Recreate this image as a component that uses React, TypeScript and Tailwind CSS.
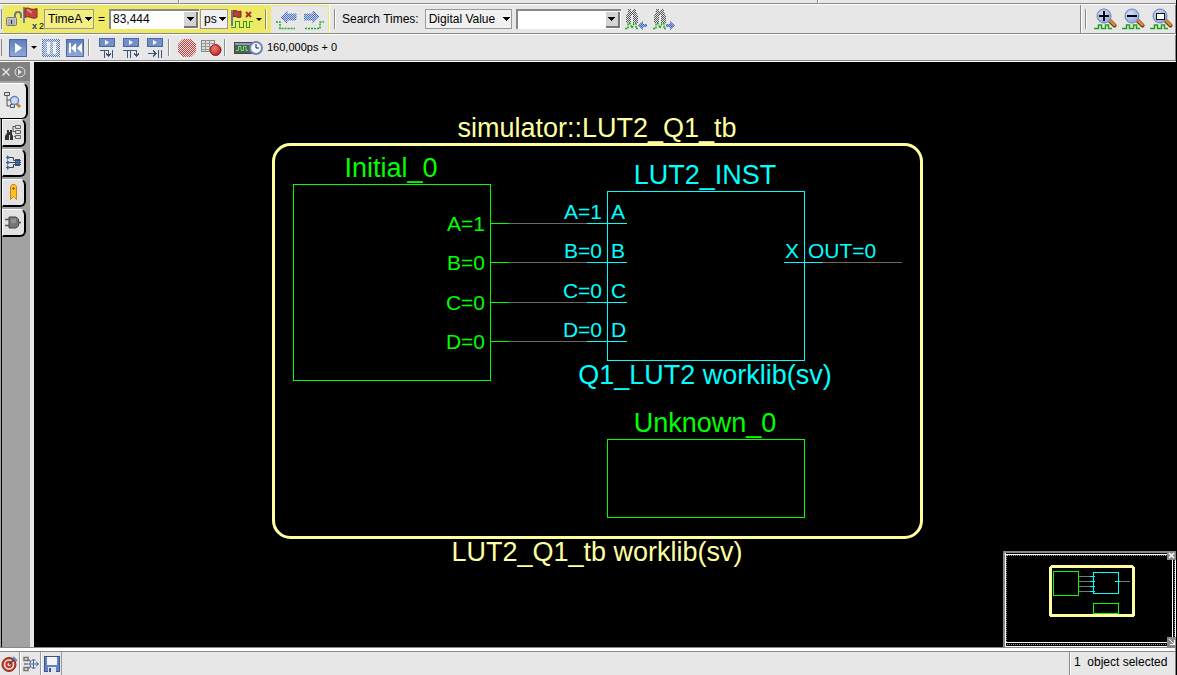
import React, { useState } from "react";

type Kids = { children?: React.ReactNode };

function Icon({ w, h, label, children }: Kids & { w: number; h: number; label?: string }) {
  return (
    <svg width={w} height={h} viewBox={`0 0 ${w} ${h}`} aria-label={label} aria-hidden={label ? undefined : true} className="block shrink-0">
      {children}
    </svg>
  );
}

function IconButton({ label, className, disabled, children }: Kids & { label: string; className?: string; disabled?: boolean }) {
  return (
    <button type="button" aria-label={label} title={label} disabled={disabled} className={"flex shrink-0 items-center justify-center " + (className ?? "")}>
      {children}
    </button>
  );
}

function SharedDefs() {
  return (
    <svg width="0" height="0" className="absolute" aria-hidden="true">
      <defs>
        <pattern id="checker" width="2" height="2" patternUnits="userSpaceOnUse">
          <rect width="2" height="2" fill="#000" />
          <rect width="1" height="1" fill="#fff" />
          <rect x="1" y="1" width="1" height="1" fill="#fff" />
        </pattern>
        <mask id="dither" maskUnits="userSpaceOnUse" x="0" y="0" width="40" height="40">
          <rect width="40" height="40" fill="url(#checker)" shapeRendering="crispEdges" />
        </mask>
        <linearGradient id="blueTile" x1="0" y1="0" x2="0" y2="1">
          <stop offset="0" stopColor="#5f7fbc" />
          <stop offset="1" stopColor="#8fa9d8" />
        </linearGradient>
        <radialGradient id="lens" cx="0.4" cy="0.35" r="0.7">
          <stop offset="0" stopColor="#d3ddfa" />
          <stop offset="1" stopColor="#8ea6e0" />
        </radialGradient>
        <radialGradient id="redBall" cx="0.4" cy="0.35" r="0.7">
          <stop offset="0" stopColor="#f08070" />
          <stop offset="1" stopColor="#b81e1e" />
        </radialGradient>
      </defs>
    </svg>
  );
}

function Divider() {
  return <span className="my-1 w-[2px] shrink-0 self-stretch border-r border-white bg-[#888888]" />;
}

function Caret() {
  return (
    <Icon w={7} h={4}>
      <path d="M0 0H7V1H6V2H5V3H4V4H3V3H2V2H1V1H0Z" fill="#000" shapeRendering="crispEdges" />
    </Icon>
  );
}

function Dropdown({ label, options, className }: { label: string; options: string[]; className: string }) {
  return (
    <div className={"relative flex h-5 shrink-0 items-center border border-[#999999] " + className}>
      <select aria-label={label} className="h-[18px] w-full appearance-none bg-transparent pl-[3px] text-[12px] leading-[18px] text-black outline-none">
        {options.map((o) => (
          <option key={o}>{o}</option>
        ))}
      </select>
      <span className="pointer-events-none absolute right-px">
        <Caret />
      </span>
    </div>
  );
}

function Combo({ label, value, className }: { label: string; value: string; className: string }) {
  const [text, setText] = useState(value);
  return (
    <div className={"flex h-5 shrink-0 border-t-2 border-l-2 border-[#888888] bg-white " + className}>
      <input aria-label={label} value={text} onChange={(e) => setText(e.target.value)} className="min-w-0 flex-1 bg-transparent pb-[2px] pl-[2px] text-[12px] leading-4 text-black outline-none" />
      <button type="button" aria-label={label + " list"} className="my-px mr-px flex w-[14px] items-center justify-center border-r-2 border-b-2 border-[#777777] bg-[#d4d4d4]">
        <Caret />
      </button>
    </div>
  );
}

function SearchWave({ dir }: { dir: "left" | "right" }) {
  return (
    <Icon w={22} h={22}>
      <g mask="url(#dither)">
        <path d="M3 1H6V3H8V1H11V4L13 8V15H8V7H6V15H1V8L3 4Z" fill="#555" />
      </g>
      <path d="M0 20.500H3V15.500H5L7 20L9 15.500H11V20.500H13" fill="none" stroke="#22a822" strokeWidth="1.500" strokeDasharray="2 1" />
      {dir === "left" ? <path d="M13 17.500L18 13V16H22V19H18V22Z" fill="#9db0dc" /> : <path d="M22 17.500L17 13V16H13V19H17V22Z" fill="#9db0dc" />}
      <g mask="url(#dither)">
        {dir === "left" ? <path d="M13 17.500L18 13V16H22V19H18V22Z" fill="#4a6dbb" /> : <path d="M22 17.500L17 13V16H13V19H17V22Z" fill="#4a6dbb" />}
      </g>
    </Icon>
  );
}

function ZoomIcon({ mark }: { mark: "plus" | "minus" | "box" }) {
  return (
    <Icon w={23} h={22}>
      <path d="M0 20.500H4.500V17H7.500V20.500H11.500V17H14.500V20.500H18" fill="none" stroke="#22a022" strokeWidth="1.500" />
      <path d="M15 12L20.500 17.500" stroke="#5b3a12" strokeWidth="4" strokeLinecap="round" />
      <path d="M15.500 12L20.500 17" stroke="#d88a2c" strokeWidth="2.500" strokeLinecap="round" />
      <circle cx="10" cy="8" r="7" fill="url(#lens)" stroke="#7184ad" />
      <g shapeRendering="crispEdges">
        {mark !== "box" && <rect x="5" y="7" width="10" height="2" fill="#000" />}
        {mark === "plus" && <rect x="9" y="3" width="2" height="10" fill="#000" />}
        {mark === "box" && (
          <>
            <rect x="6" y="5" width="9" height="7" fill="#111" />
            <rect x="7" y="6" width="7" height="5" fill="#fff" />
          </>
        )}
      </g>
    </Icon>
  );
}

function BlueTile({ children }: Kids) {
  return (
    <Icon w={18} h={18}>
      <rect x="0.500" y="0.500" width="17" height="17" fill="url(#blueTile)" stroke="#4a66a4" />
      {children}
    </Icon>
  );
}

function StepIcon({ d }: { d: string }) {
  return (
    <Icon w={17} h={20}>
      <rect x="0.500" y="0.500" width="15" height="8" fill="#7391c8" stroke="#4a66a4" />
      <path d="M6 2V7L10 4.500Z" fill="#fff" />
      <path d={d} fill="none" stroke="#3a5578" strokeWidth="1" shapeRendering="crispEdges" />
    </Icon>
  );
}

function MenuBarEdge() {
  return (
    <div className="flex h-[5px] shrink-0 border-b border-white">
      <span className="w-[179px] shrink-0 border-r border-b border-[#888888]" />
      <span className="w-[639px] shrink-0 border-r border-b border-l border-[#888888] border-l-white" />
      <span className="flex-1 border-b border-l border-[#888888] border-l-white" />
    </div>
  );
}

function TimeToolbar() {
  return (
    <div className="flex h-[30px] shrink-0 border-b border-white">
      <div className="flex min-w-0 flex-1 border-b border-[#888888]">
        <span className="my-1 mr-px w-[2px] shrink-0 border-r border-[#888888]" />
        <div className="flex shrink-0 items-center bg-[#efea66] pl-[3px]">
          <IconButton label="Lock cursors">
            <Icon w={16} h={16}>
              <path d="M9 8V4Q9 1 12 1Q15 1 15 4V7" fill="none" stroke="#777" strokeWidth="2" />
              <rect x="0.500" y="6.500" width="10" height="8" rx="1" fill="#c9c9c9" stroke="#777" />
              <path d="M2 9H9M2 11H9M2 13H9" stroke="#9a9a9a" />
              <rect x="5" y="9" width="1" height="4" fill="#333" />
            </Icon>
          </IconButton>
          <IconButton label="Cursor flag" className="ml-px h-6 w-[21px] items-start">
            <span className="relative block h-6 w-[21px]">
              <Icon w={17} h={17}>
                <rect x="0" y="0" width="2" height="16" fill="#7280a0" />
                <path d="M2 1.500C6 -0.500 8 4 14 1.500V10.500C9 13 6 8 2 10.500Z" fill="#c5433a" stroke="#7d2a2a" />
                <path d="M4 3.500C6 2.500 7 5 9 5.500" stroke="#e98a7d" strokeWidth="2" fill="none" />
              </Icon>
              <span className="absolute right-0 bottom-0 flex items-end text-[9px] leading-[10px] text-black">
                <b className="pr-[2px] text-[#223a80]">x</b>2
              </span>
            </span>
          </IconButton>
          <Dropdown label="Time cursor" options={["TimeA", "TimeB"]} className="w-[50px] bg-[#f3ee85]" />
          <span className="w-[15px] shrink-0 text-center text-[12px]">=</span>
          <Combo label="Cursor time" value="83,444" className="w-[90px]" />
          <Dropdown label="Time unit" options={["ps", "ns"]} className="ml-px w-[28px] bg-[#f1f1f1]" />
          <IconButton label="Cursor options" className="ml-[3px] gap-[2px]">
            <Icon w={23} h={20}>
              <path d="M2 2C5 0 7 4 10 2V8C7 10 5 6 2 8Z" fill="#b8402f" stroke="#7d2a2a" />
              <rect x="0" y="1" width="2" height="16" fill="#6d7890" />
              <path d="M15 3L20 8M20 3L15 8" stroke="#a83222" strokeWidth="2" />
              <path d="M0 18.500H4.500V12.500H8.500V18.500H12.500V12.500H15.500V18.500H18.500V12.500H22" fill="none" stroke="#2f9a22" strokeWidth="1.500" shapeRendering="crispEdges" />
            </Icon>
            <Icon w={6} h={3}>
              <path d="M0 0H6L3 3Z" />
            </Icon>
          </IconButton>
          <span className="ml-[3px]" />
          <Divider />
          <div className="mt-px ml-1 flex items-center gap-[7px] self-stretch bg-[#e7e7e7] pr-[3px] pl-[5px]">
            <IconButton label="Previous edge" disabled>
              <Icon w={21} h={20}>
                <path d="M0 12H4V18.500H19" fill="none" stroke="#22a822" strokeWidth="1.500" strokeDasharray="2 1" />
                <path d="M5 7L11 1V4H20V10H11V13Z" fill="#bccaea" />
                <g mask="url(#dither)">
                  <path d="M5 7L11 1V4H20V10H11V13Z" fill="#5c7cc4" stroke="#4a68ae" />
                </g>
              </Icon>
            </IconButton>
            <IconButton label="Next edge" disabled>
              <Icon w={21} h={20}>
                <path d="M1 18.500H16V12H20" fill="none" stroke="#22a822" strokeWidth="1.500" strokeDasharray="2 1" />
                <path d="M15 7L9 1V4H0V10H9V13Z" fill="#bccaea" />
                <g mask="url(#dither)">
                  <path d="M15 7L9 1V4H0V10H9V13Z" fill="#5c7cc4" stroke="#4a68ae" />
                </g>
              </Icon>
            </IconButton>
          </div>
          <span className="w-px shrink-0" />
        </div>
        <div className="flex shrink-0 items-center border-l border-white pl-1">
          <Divider />
          <span className="ml-[6px] text-[12px] whitespace-nowrap">Search Times:</span>
          <span className="w-[6px] shrink-0" />
          <Dropdown label="Search type" options={["Digital Value", "Signal Edge"]} className="w-[87px] bg-[#f1f1f1]" />
          <span className="w-1 shrink-0" />
          <Combo label="Search value" value="" className="w-[105px]" />
          <IconButton label="Search backward" disabled className="ml-1">
            <SearchWave dir="left" />
          </IconButton>
          <IconButton label="Search forward" disabled className="ml-[6px]">
            <SearchWave dir="right" />
          </IconButton>
        </div>
        <span className="ml-auto w-[2px] shrink-0 border-r border-white bg-[#888888]" />
        <div className="flex shrink-0 items-center gap-[5px] border-r border-[#888888] pr-[2px] pl-[3px]">
          <Divider />
          <span />
          <IconButton label="Zoom in" className="-ml-[3px]">
            <ZoomIcon mark="plus" />
          </IconButton>
          <IconButton label="Zoom out">
            <ZoomIcon mark="minus" />
          </IconButton>
          <IconButton label="Zoom fit">
            <ZoomIcon mark="box" />
          </IconButton>
        </div>
      </div>
    </div>
  );
}

function RunToolbar() {
  return (
    <div className="border-b border-white">
      <div className="flex h-[26px] shrink-0 items-center border-r border-b border-[#888888]">
        <span className="my-1 mr-[7px] w-[2px] shrink-0 self-stretch border-r border-[#888888]" />
        <IconButton label="Run">
          <BlueTile>
            <path d="M6 4V14L13 9Z" fill="#fff" />
          </BlueTile>
        </IconButton>
        <IconButton label="Run options" className="ml-1">
          <Icon w={6} h={3}>
            <path d="M0 0H6L3 3Z" />
          </Icon>
        </IconButton>
        <IconButton label="Pause" disabled className="ml-[5px]">
          <Icon w={18} h={18}>
            <rect width="18" height="18" fill="#4a72b8" mask="url(#dither)" />
            <rect x="2" y="2" width="14" height="14" fill="#dfe6f2" fillOpacity="0.300" />
            <path d="M5 3H8V15H5ZM11 3H14V15H11Z" fill="#fff" fillOpacity="0.800" />
          </Icon>
        </IconButton>
        <IconButton label="Reset" className="ml-[6px]">
          <BlueTile>
            <path d="M3 4H5V14H3ZM10 4V14L5 9ZM16 4V14L11 9Z" fill="#fff" />
          </BlueTile>
        </IconButton>
        <span className="w-1 shrink-0" />
        <Divider />
        <IconButton label="Step" className="mt-px ml-[9px]">
          <StepIcon d="M1 12.500H5.500V20M5.500 12.500H9.500V18M7 15.500L9.500 18L12 15.500M13.500 12V20" />
        </IconButton>
        <IconButton label="Next" className="mt-px ml-[7px]">
          <StepIcon d="M0 12.500H13.500V18M4.500 12.500V20M7.500 12.500V20M11 15.500L13.500 18L16 15.500" />
        </IconButton>
        <IconButton label="Run to" className="mt-px ml-[7px]">
          <StepIcon d="M1 15.500H9M6 12.500L9 15.500L6 18.500M11.500 12V20M14.500 12V20" />
        </IconButton>
        <span className="w-1 shrink-0" />
        <Divider />
        <IconButton label="Stop" disabled className="ml-2">
          <Icon w={18} h={18}>
            <path d="M5 0H13L18 5V13L13 18H5L0 13V5Z" fill="#c83a34" mask="url(#dither)" />
          </Icon>
        </IconButton>
        <IconButton label="Record" className="ml-[5px]">
          <Icon w={21} h={17}>
            <rect x="0.500" y="1.500" width="13" height="11" fill="#ddd" stroke="#888" />
            <path d="M1 4.500H13M1 7.500H13M1 10.500H13M4.500 1V13M8.500 1V13" stroke="#999" />
            <circle cx="14.500" cy="11" r="5.500" fill="url(#redBall)" stroke="#8c1a1a" />
          </Icon>
        </IconButton>
        <span className="w-[2px] shrink-0" />
        <Divider />
        <span className="ml-2">
          <Icon w={29} h={14}>
            <rect x="0.500" y="1.500" width="19" height="11" fill="#555c5c" stroke="#444" />
            <rect x="1" y="2" width="19" height="2" fill="#8a9bb8" />
            <path d="M2 9.500H4.500V5.500H7V9.500H9.500V5.500H12V9.500H14" fill="none" stroke="#55f055" />
            <circle cx="22" cy="7" r="6" fill="#f4f6fb" stroke="#7186b5" strokeWidth="2" />
            <path d="M22 3V7H25" fill="none" stroke="#223" />
          </Icon>
        </span>
        <span className="ml-1 text-[11px] whitespace-nowrap">160,000ps + 0</span>
      </div>
    </div>
  );
}

function SideTab({ label, active, children }: Kids & { label: string; active?: boolean }) {
  return (
    <button
      type="button"
      aria-label={label}
      title={label}
      className={
        active
          ? "flex h-9 w-7 items-center justify-center rounded-tr-md rounded-br-md border-t border-r-2 border-b border-t-white border-r-black border-b-black bg-[#e9e9e9]"
          : "flex h-7 w-6 items-center justify-center rounded-tr-md rounded-br-md border-t border-r-2 border-b-2 border-l border-t-white border-r-black border-b-black border-l-white bg-[#e2e2e2]"
      }
    >
      {children}
    </button>
  );
}

function Sidebar() {
  return (
    <nav aria-label="Panels" className="flex w-[34px] shrink-0 border-r-4 border-[#e7e7e7] bg-[#a2a2a2]">
      <div className="flex flex-1 flex-col">
        <div className="flex h-[19px] items-center gap-1 bg-[#808080] pl-[2px]">
          <IconButton label="Close panel">
            <Icon w={8} h={8}>
              <path d="M0.500 0.500L7.500 7.500M7.500 0.500L0.500 7.500" stroke="#e2e2e2" strokeWidth="1.500" />
            </Icon>
          </IconButton>
          <IconButton label="Expand panel">
            <Icon w={12} h={12}>
              <circle cx="6" cy="6" r="5" fill="none" stroke="#e2e2e2" />
              <path d="M4 3V9L8 6Z" fill="#e2e2e2" />
            </Icon>
          </IconButton>
        </div>
        <div className="flex flex-1 flex-col pt-[2px]">
          <SideTab label="Design browser" active>
            <Icon w={18} h={18}>
              <path d="M3 4V14H7M3 8H7" fill="none" stroke="#555" />
              <path d="M0.500 0.500H5.500V3.500H0.500ZM6.500 6.500H10.500V9.500H6.500ZM6.500 12.500H10.500V15.500H6.500Z" fill="#ddd" stroke="#555" />
              <path d="M12.500 11.500L16 15" stroke="#c88430" strokeWidth="3" />
              <circle cx="10.500" cy="8.500" r="4" fill="#cbdcf5" stroke="#6785b8" strokeWidth="1.500" />
            </Icon>
          </SideTab>
          <div className="ml-px flex flex-1 flex-col gap-[2px] border-l border-black">
            <SideTab label="Design search">
              <Icon w={17} h={16}>
                <path d="M2 5H4V7H5V5H7V9L8 11V15H5V10H4V15H0V11L2 8Z" fill="#333" />
                <path d="M8 7V1.500H11M8 6.500H11M11 11.500H9" stroke="#555" fill="none" />
                <path d="M10.500 0.500H15.500V3.500H10.500ZM10.500 5.500H15.500V8.500H10.500ZM10.500 10.500H15.500V13.500H10.500Z" fill="#ddd" stroke="#666" />
              </Icon>
            </SideTab>
            <SideTab label="Scope tree">
              <Icon w={17} h={16}>
                <path d="M1 2.500H8.500V5.500H11M1 7.500H11M1 12.500H8.500V9.500H11" fill="none" stroke="#345" />
                <path d="M2 0L5 2.500L2 5ZM2 5L5 7.500L2 10ZM2 10L5 12.500L2 15Z" fill="#3d67ad" />
                <rect x="10.500" y="4.500" width="4" height="6" fill="#5877ad" stroke="#345080" />
                <path d="M9 5.500H16M9 7.500H16M9 9.500H16" stroke="#345080" />
              </Icon>
            </SideTab>
            <SideTab label="Bookmarks">
              <Icon w={9} h={17}>
                <path d="M1.500 2.500L3 0.500H6L7.500 2.500V15.500L4.500 12.500L1.500 15.500Z" fill="#ffc31f" stroke="#c78410" />
                <path d="M3 4.500H6M4.500 3V6" stroke="#a05c10" />
              </Icon>
            </SideTab>
            <SideTab label="Connections">
              <Icon w={17} h={13}>
                <path d="M0 3.500H5M0 9.500H5M14 6.500H16" stroke="#555" strokeWidth="1.500" />
                <path d="M4 1H11Q14 2 14 6.500Q14 11 11 12H4Z" fill="#777" stroke="#444" />
                <path d="M6 4H11M6 6H11" stroke="#aaa" />
              </Icon>
            </SideTab>
          </div>
        </div>
      </div>
    </nav>
  );
}

const ports = [
  { name: "A", value: "1", y: 223 },
  { name: "B", value: "0", y: 262 },
  { name: "C", value: "0", y: 302 },
  { name: "D", value: "0", y: 341 },
];

function Schematic() {
  return (
    <svg width="680" height="480" viewBox="265 110 680 480" className="block shrink-0 font-['Liberation_Sans',Arial,sans-serif]" role="img" aria-label="Schematic">
      <rect x="273.500" y="144.500" width="648" height="393" rx="17" fill="none" stroke="#ffffa0" strokeWidth="3" />
      <g fill="none" shapeRendering="crispEdges">
        <rect x="293.500" y="184.500" width="197" height="196" stroke="#00ff00" />
        <rect x="607.500" y="191.500" width="197" height="169" stroke="#00ffff" />
        <rect x="607.500" y="439.500" width="197" height="78" stroke="#00ff00" />
        {ports.map((p) => (
          <g key={p.name}>
            <rect x="491" y={p.y} width="18" height="1" fill="#00ff00" />
            <rect x="509" y={p.y} width="78" height="1" fill="#6a6a6a" />
            <rect x="587" y={p.y} width="40" height="1" fill="#00ffff" />
          </g>
        ))}
        <rect x="784" y="262" width="39" height="1" fill="#00ffff" />
        <rect x="823" y="262" width="79" height="1" fill="#6a6a6a" />
      </g>
      <g className="text-[27px]" textAnchor="middle">
        <text x="597" y="137" fill="#ffffa0">simulator::LUT2_Q1_tb</text>
        <text x="391" y="177" fill="#00ff00">Initial_0</text>
        <text x="705" y="184" fill="#00ffff">LUT2_INST</text>
        <text x="705" y="384" fill="#00ffff">Q1_LUT2 worklib(sv)</text>
        <text x="705" y="432" fill="#00ff00">Unknown_0</text>
        <text x="597" y="561" fill="#ffffa0">LUT2_Q1_tb worklib(sv)</text>
      </g>
      <g className="text-[21px]">
        {ports.map((p) => (
          <g key={p.name}>
            <text x="485" y={p.y + 8} textAnchor="end" fill="#00ff00">{`${p.name}=${p.value}`}</text>
            <text x="602" y={p.y - 4} textAnchor="end" fill="#00ffff">{`${p.name}=${p.value}`}</text>
            <text x="611" y={p.y - 4} fill="#00ffff">{p.name}</text>
          </g>
        ))}
        <text x="785" y="258" fill="#00ffff">X</text>
        <text x="808" y="258" fill="#00ffff">OUT=0</text>
      </g>
    </svg>
  );
}

function Minimap() {
  return (
    <svg width="173" height="96" viewBox="0 0 173 96" className="absolute right-0 bottom-0 block" role="img" aria-label="Overview" shapeRendering="crispEdges">
      <rect width="173" height="96" fill="#000" />
      <path d="M0 1H173M1 0V96" stroke="#888" strokeWidth="2" />
      <path d="M2.500 2V96M2 95.500H173M2 91.500H171M169.500 2V92M2 3.500H171M172.500 2V96" stroke="#fff" fill="none" />
      <path d="M4 4.500H169M3.500 4V92M171.500 4V92M4 93.500H169" stroke="#999" strokeDasharray="1 1" fill="none" />
      <rect x="47.500" y="15.500" width="83" height="49" rx="2" fill="none" stroke="#ffffa0" strokeWidth="3" />
      <rect x="50.500" y="20.500" width="25" height="24" fill="none" stroke="#00ff00" />
      <rect x="90.500" y="21.500" width="25" height="21" fill="none" stroke="#00ffff" />
      <rect x="90.500" y="52.500" width="25" height="10" fill="none" stroke="#00ff00" />
      <path d="M76 25.500H87M76 30.500H87M76 35.500H87M76 40.500H87M117 30.500H127" stroke="#777" />
      <path d="M87 25.500H92M87 30.500H92M87 35.500H92M87 40.500H92M112 30.500H117" stroke="#00ffff" />
      <rect x="164" y="0" width="9" height="9" fill="#888" />
      <path d="M166 2L171 7M171 2L166 7" stroke="#fff" shapeRendering="auto" strokeWidth="1.500" />
      <rect x="164" y="86" width="9" height="10" fill="#888" />
      <path d="M166 88L171 93M171.500 89V93.500H167" stroke="#fff" fill="none" />
    </svg>
  );
}

function StatusBar() {
  return (
    <footer className="shrink-0 border-r border-[#888888] bg-[#e7e7e7]">
      <div className="h-[5px] border-t border-b border-[#888888] bg-white" />
      <div className="flex h-[23px] items-stretch">
        <IconButton label="Target" className="w-5 border-r border-[#999999]">
          <Icon w={17} h={16}>
            <circle cx="8" cy="8.500" r="7" fill="#c63a2c" stroke="#8b2a20" />
            <circle cx="8" cy="8.500" r="4.500" fill="#c63a2c" stroke="#f3e5e0" strokeWidth="1.500" />
            <circle cx="8" cy="8.500" r="1.500" fill="#f3e5e0" />
            <path d="M8 8.500L14 2.500" stroke="#445" strokeWidth="1.500" />
            <path d="M12 1L16 5" stroke="#6d86c0" strokeWidth="2" />
          </Icon>
        </IconButton>
        <IconButton label="Pan design" className="w-[21px] border-r border-l border-[#999999] border-l-white">
          <Icon w={16} h={16}>
            <path d="M1 1.500H5V4.500H1ZM1 11.500H5V14.500H1ZM5 3L8 6M5 13L8 10M1 8H5" fill="none" stroke="#777" strokeWidth="1.500" />
            <path d="M10.500 3V13M5.500 8H15.500M8.500 5L10.500 3L12.500 5M8.500 11L10.500 13L12.500 11M13 6L15.500 8L13 10M8 6L6 8L8 10" fill="none" stroke="#48669e" />
          </Icon>
        </IconButton>
        <IconButton label="Save" className="w-[21px] border-r border-l border-[#999999] border-l-white">
          <Icon w={16} h={16}>
            <rect x="0.500" y="0.500" width="15" height="15" fill="#6482bd" stroke="#3b558c" />
            <rect x="3" y="1" width="10" height="8" fill="#f4f4f4" />
            <rect x="4" y="11" width="8" height="5" fill="#dde3ee" />
            <rect x="5" y="12" width="2" height="4" fill="#3b558c" />
          </Icon>
        </IconButton>
        <span className="ml-auto border-l border-[#888888]" />
        <span className="w-[105px] border-l border-white pt-px pl-[3px] text-[12px] leading-[18px] whitespace-pre">1  object selected</span>
      </div>
    </footer>
  );
}

export default function App() {
  return (
    <div className="flex min-h-screen flex-col border-r border-black bg-[#e7e7e7] font-['Liberation_Sans',Arial,sans-serif] text-black">
      <SharedDefs />
      <header>
        <MenuBarEdge />
        <TimeToolbar />
        <RunToolbar />
      </header>
      <div className="flex flex-1">
        <Sidebar />
        <main className="relative flex flex-1 justify-center bg-black pt-12">
          <Schematic />
          <Minimap />
        </main>
      </div>
      <StatusBar />
    </div>
  );
}
